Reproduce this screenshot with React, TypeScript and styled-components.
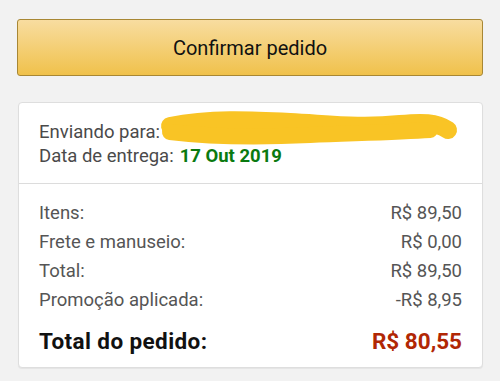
import React from "react";
import styled, { createGlobalStyle } from "styled-components";

const Global = createGlobalStyle`
  html, body { margin: 0; padding: 0; background: #f2f2f2; }
  body { font-family: Roboto, "Noto Sans", sans-serif; }
`;

const Page = styled.div`
  width: 500px;
  height: 381px;
  box-sizing: border-box;
  padding: 19px 17px 0 17px;
  display: flex;
  flex-direction: column;
  gap: 26px;
  overflow: hidden;
`;

const ConfirmButton = styled.button`
  height: 57px;
  width: 100%;
  border: 1px solid #a88734;
  border-radius: 3px;
  background: linear-gradient(to bottom, #f8dda0, #f0c14b);
  font-family: inherit;
  font-size: 20px;
  color: #111;
  display: flex;
  align-items: center;
  justify-content: center;
  padding: 0;
`;

const Card = styled.div`
  margin: 0 0 0 1px;
  background: #fff;
  border: 1px solid #dedede;
  border-radius: 4px;
  box-shadow: 0 1px 1px rgba(0, 0, 0, 0.06);
  display: flex;
  flex-direction: column;
`;

const Section = styled.div<{ $top?: boolean }>`
  padding: ${(p) => (p.$top ? "17px 20px 15px 20px" : "14px 20px 7px 20px")};
  border-top: ${(p) => (p.$top ? "none" : "1px solid #dcdcdc")};
  display: flex;
  flex-direction: column;
`;

const InfoLine = styled.div`
  font-size: 18.5px;
  line-height: 24px;
  height: 24px;
  color: #4a4a4a;
  display: flex;
  align-items: center;
  white-space: nowrap;
`;

const Green = styled.span`
  color: #0a7a10;
  font-weight: 700;
  margin-left: 6px;
`;

const Scribble = styled.svg`
  margin-left: 0;
  flex: none;
  overflow: visible;
`;

const Row = styled.div<{ $big?: boolean }>`
  display: flex;
  justify-content: space-between;
  align-items: center;
  height: ${(p) => (p.$big ? "38px" : "29px")};
  margin-top: ${(p) => (p.$big ? "8px" : "0")};
  font-size: ${(p) => (p.$big ? "22.5px" : "18.5px")};
  font-weight: ${(p) => (p.$big ? 700 : 400)};
  color: ${(p) => (p.$big ? "#111" : "#555")};
`;

const Label = styled.span<{ $big?: boolean }>`
  letter-spacing: ${(p) => (p.$big ? "0.4px" : "normal")};
`;

const Price = styled.span<{ $red?: boolean }>`
  color: ${(p) => (p.$red ? "#b12704" : "inherit")};
`;

const rows = [
  ["Itens:", "R$ 89,50"],
  ["Frete e manuseio:", "R$ 0,00"],
  ["Total:", "R$ 89,50"],
  ["Promoção aplicada:", "-R$ 8,95"],
];

export default function App() {
  return (
    <>
      <Global />
      <Page>
        <ConfirmButton>Confirmar pedido</ConfirmButton>
        <Card>
          <Section $top>
            <InfoLine>
              Enviando para:
              <Scribble width="300" height="24" viewBox="0 0 300 24">
                <path
                  d="M10 6 C 50 -2, 90 0, 130 2 C 170 4, 200 8, 240 4 C 262 2, 276 2, 288 10"
                  stroke="#f9c425"
                  strokeWidth="18"
                  fill="none"
                  strokeLinecap="round"
                  strokeLinejoin="round"
                />
                <path
                  d="M10 12 C 60 18, 110 17, 150 15 C 200 13, 240 12, 270 10"
                  stroke="#f9c425"
                  strokeWidth="16"
                  fill="none"
                  strokeLinecap="round"
                />
              </Scribble>
            </InfoLine>
            <InfoLine>
              Data de entrega:<Green>17 Out 2019</Green>
            </InfoLine>
          </Section>
          <Section>
            {rows.map(([l, v]) => (
              <Row key={l}>
                <Label>{l}</Label>
                <Price>{v}</Price>
              </Row>
            ))}
            <Row $big>
              <Label $big>Total do pedido:</Label>
              <Price $red>R$ 80,55</Price>
            </Row>
          </Section>
        </Card>
      </Page>
    </>
  );
}
